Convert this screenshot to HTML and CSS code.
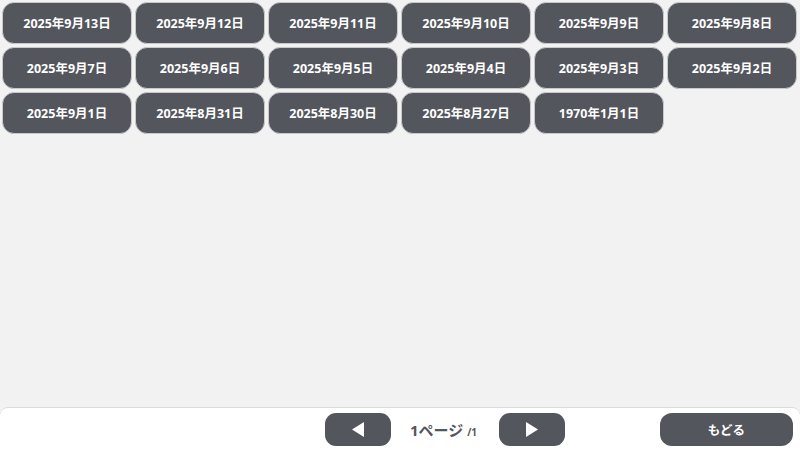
FILE: index.html
```html
<!DOCTYPE html>
<html lang="ja">
<head>
    <meta charset="UTF-8">
    <meta name="viewport" content="width=device-width, initial-scale=1.0">
    <title>日付一覧</title>
    <link rel="stylesheet" href="styles.css">
</head>
<body>
    <main class="dates">
        <button class="date-btn">2025年9月13日</button>
        <button class="date-btn">2025年9月12日</button>
        <button class="date-btn">2025年9月11日</button>
        <button class="date-btn">2025年9月10日</button>
        <button class="date-btn">2025年9月9日</button>
        <button class="date-btn">2025年9月8日</button>
        <button class="date-btn">2025年9月7日</button>
        <button class="date-btn">2025年9月6日</button>
        <button class="date-btn">2025年9月5日</button>
        <button class="date-btn">2025年9月4日</button>
        <button class="date-btn">2025年9月3日</button>
        <button class="date-btn">2025年9月2日</button>
        <button class="date-btn">2025年9月1日</button>
        <button class="date-btn">2025年8月31日</button>
        <button class="date-btn">2025年8月30日</button>
        <button class="date-btn">2025年8月27日</button>
        <button class="date-btn">1970年1月1日</button>
    </main>

    <footer class="bottom-bar">
        <div class="pager">
            <button class="page-btn" aria-label="前へ">
                <svg width="14" height="17" viewBox="0 0 14 17"><path d="M13 1 L1 8.5 L13 16 Z" fill="#fff"/></svg>
            </button>
            <span class="page-label">1ページ <small>/1</small></span>
            <button class="page-btn" aria-label="次へ">
                <svg width="14" height="17" viewBox="0 0 14 17"><path d="M1 1 L13 8.5 L1 16 Z" fill="#fff"/></svg>
            </button>
        </div>
        <button class="back-btn">もどる</button>
    </footer>
</body>
</html>
```

FILE: styles.css
```css
body {
    margin: 0;
    width: 800px;
    height: 450px;
    display: flex;
    flex-direction: column;
    background-color: #f2f2f2;
    font-family: "Open Sans", "Noto Sans CJK JP", sans-serif;
    overflow: hidden;
}

button {
    font-family: inherit;
    cursor: pointer;
}

/* === Date grid === */
.dates {
    flex: 1;
    display: grid;
    grid-template-columns: repeat(6, 130px);
    grid-auto-rows: 42px;
    gap: 3px;
    padding: 2px;
    align-content: start;
}

.date-btn {
    background: #54565d;
    color: #fff;
    border: 1px solid #c9c9cb;
    border-radius: 12px;
    font-size: 12.5px;
    font-weight: bold;
    padding: 0 0 2px;
}

/* === Bottom bar === */
.bottom-bar {
    height: 42px;
    background: #fff;
    border-top: 1px solid #dcdcdc;
    border-radius: 8px 8px 0 0;
    display: flex;
    align-items: center;
    padding: 0 7px 0 325px;
    box-sizing: content-box;
}

.pager {
    display: flex;
    align-items: center;
    gap: 19px;
}

.page-btn {
    width: 66px;
    height: 33px;
    border: none;
    border-radius: 11px;
    background: #54565d;
    display: flex;
    align-items: center;
    justify-content: center;
    padding: 0;
}

.page-label {
    width: 70px;
    font-size: 15px;
    font-weight: bold;
    color: #54565d;
    white-space: nowrap;
}

.page-label small {
    font-size: 10px;
}

.back-btn {
    margin-left: auto;
    width: 133px;
    height: 33px;
    border: none;
    border-radius: 12px;
    background: #54565d;
    color: #fff;
    font-size: 12.5px;
    font-weight: bold;
}
```
